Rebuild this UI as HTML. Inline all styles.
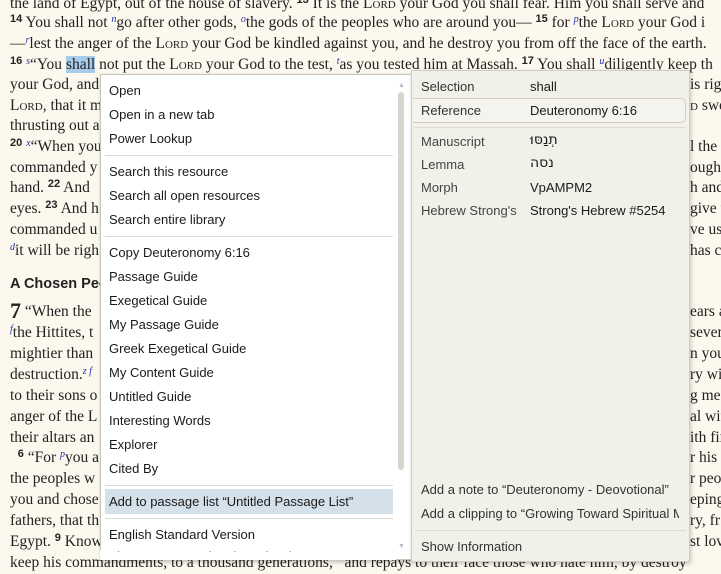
<!DOCTYPE html>
<html><head><meta charset="utf-8"><style>
*{margin:0;padding:0;box-sizing:border-box}
body{width:721px;height:574px;overflow:hidden;background:#fcf8ee;position:relative;font-family:"Liberation Serif",serif;color:#222}
.l{position:absolute;left:10px;font-size:15.5px;white-space:nowrap;line-height:20px;height:20px}
.r{position:absolute;left:690px;font-size:15.5px;white-space:nowrap;line-height:20px;height:20px}
sup{font-family:"Liberation Sans",sans-serif;font-weight:bold;font-size:11px;vertical-align:5px;line-height:0}
i.f{color:#2233aa;font-size:10px;vertical-align:5px;line-height:0}
.sc{font-variant:small-caps}
.hl{background:#a9cbea}
#menu{position:absolute;left:100px;top:74px;width:312px;height:486px;background:#fff;border:1px solid #c8c6bc;box-shadow:1px 2px 4px rgba(0,0,0,.25)}
#info{position:absolute;left:411px;top:70px;width:279px;height:492px;background:#f1f0e9;border:1px solid #cfcdc3;box-shadow:1px 2px 4px rgba(0,0,0,.2)}
.m{position:absolute;font-family:"Liberation Sans",sans-serif;font-size:13px;color:#1a1a1a;white-space:nowrap;line-height:16px}
.sep{position:absolute;height:1px;background:#dcdbd3}
</style></head><body>
<div class="l" style="top:-6px">the land of Egypt, out of the house of slavery. <sup>13</sup> It is the <span class="sc">Lord</span> your God you shall fear. Him you shall serve and</div>
<div class="l" style="top:13px"><sup>14</sup> You shall not <i class="f">n</i>go after other gods, <i class="f">o</i>the gods of the peoples who are around you— <sup>15</sup> for <i class="f">p</i>the <span class="sc">Lord</span> your God i</div>
<div class="l" style="top:34px">—<i class="f">r</i>lest the anger of the <span class="sc">Lord</span> your God be kindled against you, and he destroy you from off the face of the earth.</div>
<div class="l" style="top:55px"><sup>16</sup> <i class="f">s</i>“You <span class="hl">shall</span> not put the <span class="sc">Lord</span> your God to the test, <i class="f">t</i>as you tested him at Massah. <sup>17</sup> You shall <i class="f">u</i>diligently keep th</div>
<div class="l" style="top:75px">your God, and</div>
<div class="l" style="top:96px"><span class="sc">Lord</span>, that it m</div>
<div class="l" style="top:116px">thrusting out a</div>
<div class="l" style="top:137px"><sup>20</sup> <i class="f">x</i>“When you</div>
<div class="l" style="top:158px">commanded y</div>
<div class="l" style="top:178px">hand. <sup>22</sup> And</div>
<div class="l" style="top:199px">eyes. <sup>23</sup> And h</div>
<div class="l" style="top:220px">commanded u</div>
<div class="l" style="top:241px"><i class="f">d</i>it will be righ</div>
<div class="l" style="top:274px;font-family:'Liberation Sans',sans-serif;font-weight:bold;font-size:14.5px">A Chosen People</div>
<div class="l" style="top:302px"><span style="font-size:22px;font-weight:bold;vertical-align:-2px;line-height:0">7</span> “When the</div>
<div class="l" style="top:323px"><i class="f">f</i>the Hittites, t</div>
<div class="l" style="top:344px">mightier than</div>
<div class="l" style="top:365px">destruction.<i class="f">z f</i></div>
<div class="l" style="top:386px">to their sons o</div>
<div class="l" style="top:407px">anger of the L</div>
<div class="l" style="top:428px">their altars an</div>
<div class="l" style="top:448px">&nbsp;&nbsp;<sup>6</sup> “For <i class="f">p</i>you a</div>
<div class="l" style="top:469px">the peoples w</div>
<div class="l" style="top:490px">you and chose</div>
<div class="l" style="top:511px">fathers, that th</div>
<div class="l" style="top:532px">Egypt. <sup>9</sup> Know</div>
<div class="l" style="top:553px">keep his commandments, to a thousand generations, &nbsp;&nbsp;and repays to their face those who hate him, by destroy</div>
<div class="r" style="top:75px">is rig</div>
<div class="r" style="top:96px"><span class="sc">d</span> swo</div>
<div class="r" style="top:137px">l the r</div>
<div class="r" style="top:158px">ought</div>
<div class="r" style="top:178px">h and</div>
<div class="r" style="top:199px">give t</div>
<div class="r" style="top:220px">ve us</div>
<div class="r" style="top:241px">has co</div>
<div class="r" style="top:302px">ears a</div>
<div class="r" style="top:323px">seven</div>
<div class="r" style="top:344px">n you</div>
<div class="r" style="top:365px">ry wi</div>
<div class="r" style="top:386px">g me</div>
<div class="r" style="top:407px">al wit</div>
<div class="r" style="top:428px">ith fir</div>
<div class="r" style="top:448px">r his</div>
<div class="r" style="top:469px">r peop</div>
<div class="r" style="top:490px">eping</div>
<div class="r" style="top:511px">ry, fr</div>
<div class="r" style="top:532px">st lov</div>

<div id="menu"></div>
<div id="info"></div>
<div style="position:absolute;left:398px;top:92px;width:6px;height:378px;background:#d6d5cf;border-radius:3px"></div>
<div style="position:absolute;left:398px;top:82px;font-size:7px;color:#bbb;font-family:sans-serif">▲</div>
<div style="position:absolute;left:398px;top:543px;font-size:7px;color:#bbb;font-family:sans-serif">▼</div>
<div style="position:absolute;left:105px;top:489px;width:288px;height:25px;background:#d5e1ea"></div>
<div class="sep" style="left:105px;top:155px;width:288px"></div>
<div class="sep" style="left:105px;top:236px;width:288px"></div>
<div class="sep" style="left:105px;top:485px;width:288px"></div>
<div class="sep" style="left:105px;top:518px;width:288px"></div>
<div style="position:absolute;left:413px;top:98px;width:273px;height:25px;border:1px solid #cfcdc3;border-left:none;border-radius:0 5px 5px 0;background:#f4f3ee"></div>
<div class="sep" style="left:415px;top:127px;width:271px"></div>
<div class="sep" style="left:415px;top:530px;width:271px"></div>
<div style="position:absolute;left:100px;top:550px;width:296px;height:10px;background:#fff"></div>

<div class="m" style="left:109px;top:83px">Open</div>
<div class="m" style="left:109px;top:107px">Open in a new tab</div>
<div class="m" style="left:109px;top:131px">Power Lookup</div>
<div class="m" style="left:109px;top:164px">Search this resource</div>
<div class="m" style="left:109px;top:188px">Search all open resources</div>
<div class="m" style="left:109px;top:212px">Search entire library</div>
<div class="m" style="left:109px;top:245px">Copy Deuteronomy 6:16</div>
<div class="m" style="left:109px;top:269px">Passage Guide</div>
<div class="m" style="left:109px;top:293px">Exegetical Guide</div>
<div class="m" style="left:109px;top:317px">My Passage Guide</div>
<div class="m" style="left:109px;top:341px">Greek Exegetical Guide</div>
<div class="m" style="left:109px;top:365px">My Content Guide</div>
<div class="m" style="left:109px;top:389px">Untitled Guide</div>
<div class="m" style="left:109px;top:413px">Interesting Words</div>
<div class="m" style="left:109px;top:437px">Explorer</div>
<div class="m" style="left:109px;top:461px">Cited By</div>
<div class="m" style="left:109px;top:494px">Add to passage list “Untitled Passage List”</div>
<div class="m" style="left:109px;top:527px">English Standard Version</div>
<div class="m" style="left:109px;top:549px;height:3px;overflow:hidden">The New International Version (en-9...</div>

<div class="m" style="left:421px;top:79px;color:#333">Selection</div>
<div class="m" style="left:530px;top:79px">shall</div>
<div class="m" style="left:421px;top:103px;color:#333">Reference</div>
<div class="m" style="left:530px;top:103px">Deuteronomy 6:16</div>
<div class="m" style="left:421px;top:134px;color:#444">Manuscript</div>
<div class="m" style="left:530px;top:132px;font-family:'DejaVu Sans',serif;font-size:14px">תְנַסּוּ</div>
<div class="m" style="left:421px;top:157px;color:#444">Lemma</div>
<div class="m" style="left:530px;top:155px;font-family:'DejaVu Sans',serif;font-size:14px">נסה</div>
<div class="m" style="left:421px;top:180px;color:#444">Morph</div>
<div class="m" style="left:530px;top:180px">VpAMPM2</div>
<div class="m" style="left:421px;top:203px;color:#444">Hebrew Strong's</div>
<div class="m" style="left:530px;top:203px">Strong's Hebrew #5254</div>
<div class="m" style="left:421px;top:482px;color:#333">Add a note to “Deuteronomy - Deovotional”</div>
<div class="m" style="left:421px;top:506px;color:#333;width:258px;overflow:hidden">Add a clipping to “Growing Toward Spiritual Maturity”</div>
<div class="m" style="left:421px;top:539px;color:#333">Show Information</div>
</body></html>
